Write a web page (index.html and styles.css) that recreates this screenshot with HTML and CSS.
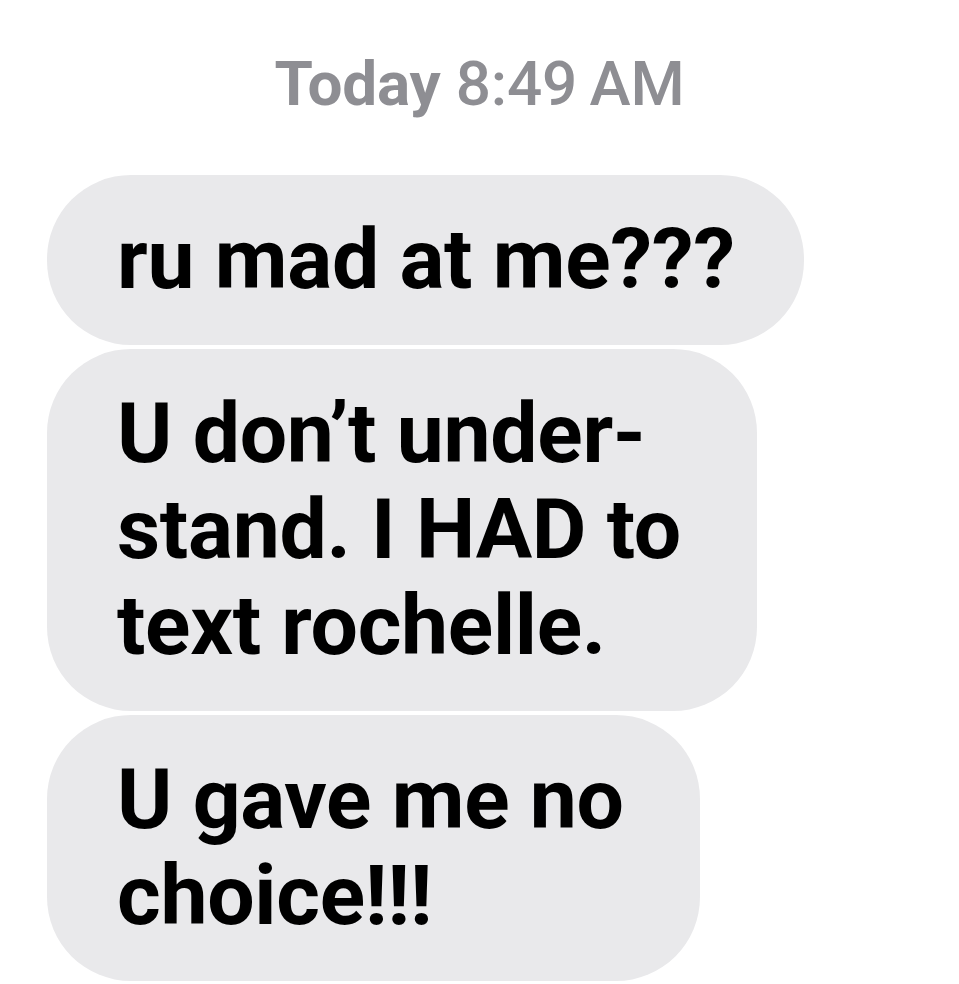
FILE: index.html
```html
<!DOCTYPE html>
<html lang="en">
<head>
<meta charset="utf-8">
<title>Messages</title>
<link rel="stylesheet" href="styles.css">
</head>
<body>
<main class="thread">
  <div class="timestamp"><span class="day">Today</span> 8:49&#8201;AM</div>
  <div class="messages">
    <div class="bubble">ru mad at me???</div>
    <div class="bubble bubble-wrapped">U don’t under-<br>stand. I HAD to<br>text rochelle.</div>
    <div class="bubble bubble-wrapped">U gave me no<br>choice!!!</div>
    <div class="bubble bubble-next" aria-hidden="true"></div>
  </div>
</main>
</body>
</html>
```
FILE: styles.css
```css
html, body {
  margin: 0;
  padding: 0;
  background: #ffffff;
}

body {
  font-family: Roboto, "Liberation Sans", Arial, sans-serif;
  overflow: hidden;
  height: 984px;
}

.thread {
  display: flex;
  flex-direction: column;
  padding-top: 49px;
}

.timestamp {
  text-align: center;
  color: #8e8e93;
  font-size: 62px;
  line-height: 70px;
  font-weight: 500;
  letter-spacing: -0.2px;
  margin-bottom: 56px;
}

.timestamp .day {
  font-weight: 700;
}

.messages {
  display: flex;
  flex-direction: column;
  align-items: flex-start;
  gap: 4px;
  padding-left: 47px;
}

.bubble {
  background: #e9e9eb;
  color: #000000;
  font-size: 84px;
  line-height: 96px;
  font-weight: 700;
  letter-spacing: -0.3px;
  padding: 37px 69px 37px 70px;
  border-radius: 84px;
}

.bubble-wrapped {
  padding-right: 76px;
}

.bubble-next {
  width: 680px;
  height: 170px;
  padding: 0;
}
```
